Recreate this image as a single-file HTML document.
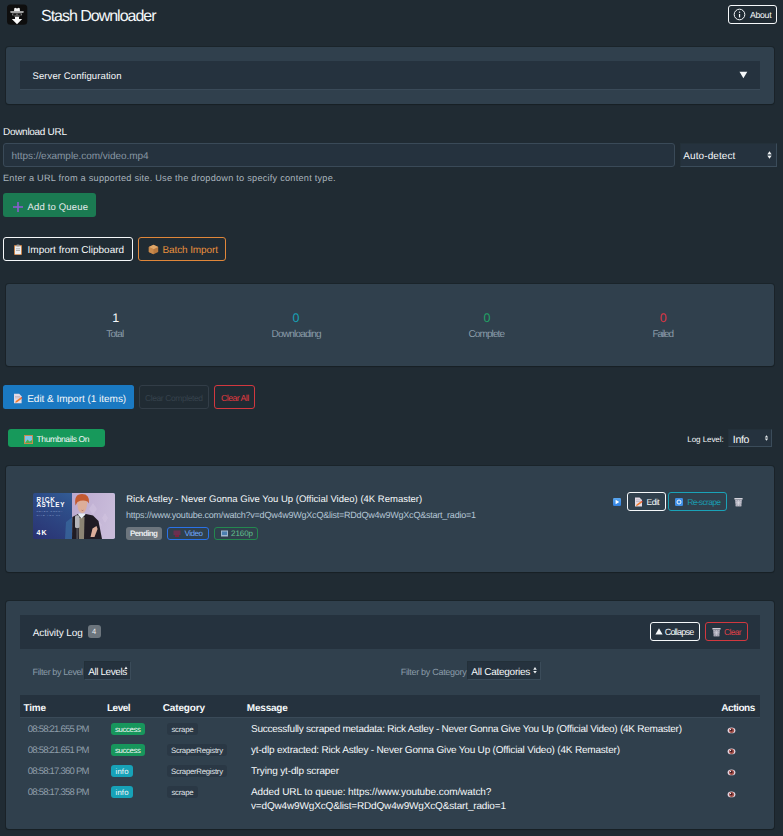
<!DOCTYPE html>
<html><head><meta charset="utf-8"><style>
html,body{margin:0;padding:0;}
body{width:783px;height:836px;background:#202b33;position:relative;overflow:hidden;font-family:"Liberation Sans",sans-serif;}
body>div{position:absolute;}
.t{white-space:nowrap;text-rendering:geometricPrecision;}
</style></head><body>
<svg style="position:absolute;left:7px;top:4px" width="21" height="21" viewBox="0 0 21 21">
<defs><linearGradient id="brim" x1="0" y1="0" x2="0" y2="1"><stop offset="0" stop-color="#e0e0e0"/><stop offset="1" stop-color="#8a8a8a"/></linearGradient></defs>
<rect x="0" y="0.5" width="20.3" height="20.2" rx="3.5" fill="#0e0e0e"/>
<path d="M7 7.2 L7.3 4.3 L8.2 3.8 L10 4.6 L11.8 3.8 L12.7 4.3 L13 7.2 Z" fill="#f4f4f4"/>
<path d="M3.4 7.2 H16.6 Q17 8.2 16.2 9 H3.8 Q3 8.2 3.4 7.2 Z" fill="url(#brim)"/>
<path d="M5 9.4 H15 V11.4 H5 Z" fill="#7a7a7a"/>
<ellipse cx="7.8" cy="10.5" rx="1.7" ry="0.9" fill="#1a1a1a"/>
<ellipse cx="12.2" cy="10.5" rx="1.7" ry="0.9" fill="#1a1a1a"/>
<path d="M7.5 11.4 H12.5 V13 H7.5 Z" fill="#6a6a6a"/>
<path d="M8 13 H12 V15 H15.2 L10 20.2 L4.8 15 H8 Z" fill="#fafafa"/>
</svg>
<div class="t" style="left:41.00px;top:9.00px;font-size:16px;line-height:16px;color:#f5f8fa;letter-spacing:-1.016px;">Stash Downloader</div>
<div style="left:728px;top:5px;width:49px;height:19px;border:1px solid #f5f8fa;border-radius:3px;box-sizing:border-box;"></div>
<svg style="position:absolute;left:733px;top:8px" width="13" height="13" viewBox="0 0 13 13"><circle cx="6.5" cy="6.5" r="5.3" fill="none" stroke="#f5f8fa" stroke-width="1"/><rect x="5.95" y="6" width="1.2" height="3.4" fill="#f5f8fa"/><rect x="5.95" y="3.6" width="1.2" height="1.2" fill="#f5f8fa"/></svg>
<div class="t" style="left:750.00px;top:11.00px;font-size:8.75px;line-height:8.75px;color:#f5f8fa;letter-spacing:-0.317px;">About</div>
<div style="left:6px;top:47px;width:768px;height:57px;background:#30404d;border-radius:3px;box-shadow:0 0 0 1px rgba(16,22,26,.35),0 1px 1px rgba(16,22,26,.3);"></div>
<div style="left:20px;top:61px;width:740px;height:29px;background:#25323e;border-bottom:1px solid #3a4a58;box-sizing:border-box;"></div>
<div class="t" style="left:32.50px;top:72.00px;font-size:9.5px;line-height:9.5px;color:#f5f8fa;letter-spacing:0.098px;">Server Configuration</div>
<svg style="position:absolute;left:739px;top:71px" width="9" height="8" viewBox="0 0 9 8"><path d="M0.5 0.8 H8.3 L4.4 7.2 Z" fill="#f5f8fa"/></svg>
<div class="t" style="left:3.00px;top:128.00px;font-size:10px;line-height:10px;color:#f5f8fa;letter-spacing:-0.296px;">Download URL</div>
<div style="left:3px;top:143px;width:672px;height:24px;background:#25323e;border:1px solid #3a4a58;border-radius:3px;box-sizing:border-box;"></div>
<div class="t" style="left:11.50px;top:152.00px;font-size:10px;line-height:10px;color:#8796a3;letter-spacing:-0.050px;">https://example.com/video.mp4</div>
<div style="left:680px;top:143px;width:97px;height:24px;background:#25323e;border-top:1px solid #233039;border-left:1px solid #233039;border-right:1px solid #3b4c5a;border-bottom:1px solid #3b4c5a;box-sizing:border-box;"></div>
<div class="t" style="left:683.30px;top:152.00px;font-size:10px;line-height:10px;color:#f5f8fa;letter-spacing:0.086px;">Auto-detect</div>
<svg style="position:absolute;left:767px;top:151px" width="5" height="8" viewBox="0 0 5 8"><path d="M2.5 0.3 L4.6 3.2 H0.4 Z M2.5 7.7 L4.6 4.8 H0.4 Z" fill="#f0f2f4"/><rect x="0.6" y="3.4" width="3.8" height="1.2" fill="#8a949c"/></svg>
<div class="t" style="left:3.00px;top:174.00px;font-size:9.2px;line-height:9.2px;color:#a9b4bd;letter-spacing:0.231px;">Enter a URL from a supported site. Use the dropdown to specify content type.</div>
<div style="left:3px;top:193px;width:93px;height:24px;background:#1b7a52;border-radius:3px;"></div>
<svg style="position:absolute;left:13px;top:202px" width="10" height="10" viewBox="0 0 10 10"><rect x="4.2" y="0" width="1.6" height="10" fill="#8a5ccf"/><rect x="0" y="4.2" width="10" height="1.6" fill="#8a5ccf"/></svg>
<div class="t" style="left:27.50px;top:203.00px;font-size:9.5px;line-height:9.5px;color:#e6ebee;letter-spacing:0.170px;">Add to Queue</div>
<div style="left:3px;top:237px;width:130px;height:24px;border:1px solid #f5f8fa;border-radius:3px;box-sizing:border-box;"></div>
<svg style="position:absolute;left:13px;top:244px" width="10" height="11" viewBox="0 0 10 11"><rect x="1" y="1" width="8" height="10" rx="1" fill="#c8834a"/><rect x="2" y="2.2" width="6" height="8" fill="#eceff2"/><rect x="3.5" y="0.5" width="3" height="2" rx="0.5" fill="#9a9a9a"/><rect x="3" y="4.5" width="4" height="0.7" fill="#999"/><rect x="3" y="6.3" width="4" height="0.7" fill="#999"/></svg>
<div class="t" style="left:27.60px;top:246.00px;font-size:10px;line-height:10px;color:#f5f8fa;letter-spacing:-0.010px;">Import from Clipboard</div>
<div style="left:138px;top:237px;width:88px;height:24px;border:1px solid #e0873a;border-radius:3px;box-sizing:border-box;"></div>
<svg style="position:absolute;left:148px;top:244px" width="11" height="11" viewBox="0 0 11 11"><path d="M5.5 0.8 L10.2 3 V8 L5.5 10.3 L0.8 8 V3 Z" fill="#b8793f"/><path d="M5.5 0.8 L10.2 3 L5.5 5.2 L0.8 3 Z" fill="#e0a86a"/><path d="M5.5 5.2 V10.3 L0.8 8 V3 Z" fill="#c98a4c"/></svg>
<div class="t" style="left:162.50px;top:246.00px;font-size:10px;line-height:10px;color:#e8903e;letter-spacing:-0.108px;">Batch Import</div>
<div style="left:6px;top:284px;width:768px;height:82px;background:#30404d;border-radius:3px;box-shadow:0 0 0 1px rgba(16,22,26,.35),0 1px 1px rgba(16,22,26,.3);"></div>
<div class="t" style="left:112.20px;top:312.00px;font-size:12.5px;line-height:12.5px;color:#f5f8fa;">1</div>
<div class="t" style="left:292.60px;top:312.00px;font-size:12.5px;line-height:12.5px;color:#17a2b8;">0</div>
<div class="t" style="left:483.50px;top:312.00px;font-size:12.5px;line-height:12.5px;color:#21a366;">0</div>
<div class="t" style="left:659.80px;top:312.00px;font-size:12.5px;line-height:12.5px;color:#dc3545;">0</div>
<div class="t" style="left:106.30px;top:330.00px;font-size:10px;line-height:10px;color:#8a9ba8;letter-spacing:-0.781px;">Total</div>
<div class="t" style="left:271.50px;top:330.00px;font-size:10px;line-height:10px;color:#8a9ba8;letter-spacing:-0.782px;">Downloading</div>
<div class="t" style="left:468.50px;top:330.00px;font-size:10px;line-height:10px;color:#8a9ba8;letter-spacing:-0.900px;">Complete</div>
<div class="t" style="left:652.40px;top:330.00px;font-size:10px;line-height:10px;color:#8a9ba8;letter-spacing:-1.107px;">Failed</div>
<div style="left:3px;top:385px;width:131px;height:24px;background:#1a79c2;border-radius:2.5px;"></div>
<svg style="position:absolute;left:13px;top:393px" width="10" height="11" viewBox="0 0 10 11"><path d="M1 0.8 H6.2 L8.6 3.2 V10.2 H1 Z" fill="#e4dae4"/><rect x="2" y="3" width="5" height="0.6" fill="#b0a8b8"/><rect x="2" y="4.6" width="5" height="0.6" fill="#b0a8b8"/><path d="M2.2 9.8 L2.8 8 L7.6 4.6 L8.8 5.8 L4 9.2 Z" fill="#f07a2a"/><path d="M7.6 4.6 L8.4 4 L9.4 5.2 L8.8 5.8 Z" fill="#e03a3a"/></svg>
<div class="t" style="left:27.20px;top:395.00px;font-size:10px;line-height:10px;color:#f5f8fa;letter-spacing:-0.021px;">Edit &amp; Import (1 items)</div>
<div style="left:139px;top:385px;width:70px;height:24px;border:1px solid #323d47;border-radius:3px;box-sizing:border-box;"></div>
<div class="t" style="left:145.00px;top:394.00px;font-size:8.5px;line-height:8.5px;color:#36424c;letter-spacing:-0.413px;">Clear Completed</div>
<div style="left:214px;top:385px;width:41px;height:24px;border:1px solid #d2383f;border-radius:3px;box-sizing:border-box;"></div>
<div class="t" style="left:221.00px;top:394.00px;font-size:8.75px;line-height:8.75px;color:#e0393f;letter-spacing:-0.548px;">Clear All</div>
<div style="left:8px;top:429px;width:97px;height:18px;background:#17995b;border-radius:3px;"></div>
<svg style="position:absolute;left:24px;top:435px" width="9" height="9" viewBox="0 0 9 9"><rect x="0" y="0" width="9" height="9" fill="#c98a4c"/><rect x="1" y="1" width="7" height="7" fill="#7fc4e8"/><path d="M1 8 L3.5 4.5 L5.5 6.5 L8 5 V8 Z" fill="#4caf50"/></svg>
<div class="t" style="left:36.50px;top:435.00px;font-size:8.5px;line-height:8.5px;color:#f5f8fa;letter-spacing:-0.386px;">Thumbnails On</div>
<div class="t" style="left:687.30px;top:436.00px;font-size:8px;line-height:8px;color:#f5f8fa;letter-spacing:-0.058px;">Log Level:</div>
<div style="left:728px;top:429px;width:44px;height:18px;background:#25323e;border-top:1px solid #233039;border-left:1px solid #233039;border-right:1px solid #3b4c5a;border-bottom:1px solid #3b4c5a;box-sizing:border-box;"></div>
<div class="t" style="left:732.80px;top:435.00px;font-size:10.5px;line-height:10.5px;color:#f5f8fa;letter-spacing:-0.305px;">Info</div>
<svg style="position:absolute;left:764px;top:435px" width="5" height="6" viewBox="0 0 5 6"><path d="M2.5 0.2 L4.2 2.5 H0.8 Z M2.5 5.8 L4.2 3.5 H0.8 Z" fill="#e8ecef"/></svg>
<div style="left:6px;top:466px;width:768px;height:106px;background:#30404d;border-radius:3px;box-shadow:0 0 0 1px rgba(16,22,26,.35),0 1px 1px rgba(16,22,26,.3);"></div>
<svg style="position:absolute;left:33px;top:493px" width="82" height="46" viewBox="0 0 82 46">
<defs>
<linearGradient id="gb" x1="0" y1="1" x2="1" y2="0"><stop offset="0" stop-color="#2a3272"/><stop offset="0.55" stop-color="#2e4f8a"/><stop offset="1" stop-color="#3a70a4"/></linearGradient>
<linearGradient id="gp" x1="0" y1="0" x2="1" y2="0.3"><stop offset="0" stop-color="#bba9cf"/><stop offset="1" stop-color="#c9bcda"/></linearGradient>
<clipPath id="cp"><rect width="82" height="46" rx="1.8"/></clipPath>
</defs>
<g clip-path="url(#cp)">
<rect width="82" height="46" fill="url(#gb)"/>
<rect x="39" y="0" width="43" height="46" fill="url(#gp)"/>
<path d="M60 10 L64 16 L60 22 L56 16 Z M72 20 L75 25 L72 30 L69 25 Z M66 28 L69 32 L66 36 L63 32 Z" fill="#d4c8e2" opacity="0.45"/>
<path d="M32 46 L33 29 L39 24.5 L39 46 Z" fill="#3a6a9e" opacity="0.75"/>
<path d="M39 46 L39.3 24 L45 21 H53 L60 22.5 L65.5 28 L69 46 Z" fill="#201c24"/>
<path d="M45.5 25 L51.5 24 L51 46 H46 Z" fill="#8c8474"/>
<path d="M45 21.5 L48.5 25.5 L52.5 21.5 L51.5 20.5 H46 Z" fill="#e6ecf2"/>
<path d="M44.3 7 Q44 19.5 49 20 Q54 19.8 54.4 7 Z" fill="#dcae9a"/>
<path d="M48 16.5 Q49.5 17.8 51 16.5 Q49.5 18.8 48 16.5 Z" fill="#8a4040"/>
<path d="M42.5 12.5 Q40.5 1 49 1 Q57 1 56 10.5 L54.5 8.5 Q49.5 6.5 44.5 9 Z" fill="#c45a30"/>
<rect x="42" y="22.3" width="4.5" height="12.7" rx="1.5" fill="#b4b4ba"/>
<rect x="43.3" y="35" width="2" height="11" fill="#4a4a52"/>
<path d="M57.5 44 L59.5 35.5 L63.5 33 L64.6 36 L61.5 44 Z" fill="#dcae9a"/>
<text x="3.4" y="9" font-family="Liberation Sans" font-weight="bold" font-size="6.3" fill="#ffffff" letter-spacing="1.0">RICK</text>
<text x="3.4" y="14.3" font-family="Liberation Sans" font-weight="bold" font-size="6.3" fill="#ffffff" letter-spacing="0.62">ASTLEY</text>
<text x="3.4" y="19.1" font-family="Liberation Sans" font-size="2.5" fill="#8fa3cf" letter-spacing="0.75">NEVER GONNA</text>
<text x="3.4" y="22.5" font-family="Liberation Sans" font-size="2.5" fill="#8fa3cf" letter-spacing="0.75">GIVE YOU UP</text>
<text x="3.4" y="42" font-family="Liberation Sans" font-weight="bold" font-size="7" fill="#ffffff" letter-spacing="1.2">4K</text>
</g>
</svg>
<div class="t" style="left:126.20px;top:495.00px;font-size:9.5px;line-height:9.5px;color:#f5f8fa;letter-spacing:0.002px;">Rick Astley - Never Gonna Give You Up (Official Video) (4K Remaster)</div>
<div class="t" style="left:126.00px;top:511.00px;font-size:9px;line-height:9px;color:#b5c7d6;letter-spacing:-0.225px;">https://www.youtube.com/watch?v=dQw4w9WgXcQ&amp;list=RDdQw4w9WgXcQ&amp;start_radio=1</div>
<div style="left:126px;top:527px;width:36px;height:13px;background:#6c757d;border-radius:3px;"></div>
<div class="t" style="left:130.00px;top:530.00px;font-size:8px;line-height:8px;color:#e9ecef;letter-spacing:-0.593px;font-weight:bold;">Pending</div>
<div style="left:167px;top:527px;width:42px;height:13px;border:1px solid #2a72e8;border-radius:3px;box-sizing:border-box;"></div>
<svg style="position:absolute;left:173px;top:530px" width="8" height="7" viewBox="0 0 8 7"><rect x="0.5" y="0.5" width="7" height="4.5" fill="#6a3050"/><rect x="2" y="5.5" width="4" height="1" fill="#c03"/></svg>
<div class="t" style="left:184.50px;top:530.00px;font-size:8px;line-height:8px;color:#6ea8fe;letter-spacing:-0.454px;">Video</div>
<div style="left:214px;top:527px;width:44px;height:13px;border:1px solid #24884f;border-radius:3px;box-sizing:border-box;"></div>
<svg style="position:absolute;left:221px;top:530px" width="7" height="7" viewBox="0 0 7 7"><rect x="0" y="0.5" width="7" height="6" fill="#9fb8cf"/><rect x="1" y="1.5" width="5" height="3.5" fill="#4b7fb0"/></svg>
<div class="t" style="left:231.00px;top:530.00px;font-size:8px;line-height:8px;color:#62c08e;letter-spacing:-0.062px;">2160p</div>
<svg style="position:absolute;left:612.5px;top:498px" width="8" height="8" viewBox="0 0 8 8"><defs><linearGradient id="pl" x1="0" y1="0" x2="0" y2="1"><stop offset="0" stop-color="#5aa8f0"/><stop offset="1" stop-color="#2f7fe0"/></linearGradient></defs><rect width="8" height="8" rx="1.2" fill="url(#pl)"/><path d="M2.6 1.8 L6.2 4 L2.6 6.2 Z" fill="#fff"/></svg>
<div style="left:627px;top:492px;width:39px;height:19px;border:1px solid #f5f8fa;border-radius:3px;box-sizing:border-box;"></div>
<svg style="position:absolute;left:634px;top:497px" width="9" height="10" viewBox="0 0 9 10"><path d="M1 0.5 H5.5 L8 3 V9.5 H1 Z" fill="#e4dae4"/><rect x="2" y="2.6" width="4.5" height="0.6" fill="#b0a8b8"/><rect x="2" y="4.1" width="4.5" height="0.6" fill="#b0a8b8"/><path d="M2 9.2 L2.6 7.5 L7 4.3 L8.1 5.4 L3.7 8.6 Z" fill="#f07a2a"/><path d="M7 4.3 L7.8 3.7 L8.8 4.8 L8.1 5.4 Z" fill="#e03a3a"/></svg>
<div class="t" style="left:646.60px;top:498.00px;font-size:8.5px;line-height:8.5px;color:#f5f8fa;letter-spacing:-0.516px;">Edit</div>
<div style="left:668px;top:492px;width:59px;height:19px;border:1px solid #1aa3b8;border-radius:3px;box-sizing:border-box;"></div>
<svg style="position:absolute;left:675px;top:498px" width="8" height="8" viewBox="0 0 8 8"><rect width="8" height="8" rx="1.2" fill="#3f8fe6"/><circle cx="4" cy="4" r="2" fill="none" stroke="#fff" stroke-width="0.9"/></svg>
<div class="t" style="left:687.20px;top:498.00px;font-size:8.5px;line-height:8.5px;color:#1a9db0;letter-spacing:-0.676px;">Re-scrape</div>
<svg style="position:absolute;left:734px;top:497px" width="9" height="10" viewBox="0 0 9 10"><rect x="0.3" y="1" width="8.4" height="1.4" rx="0.5" fill="#d4d4dc"/><path d="M1 2.4 H8 L7.3 9.4 H1.7 Z" fill="#a9a9b6"/><path d="M2 3.2 L7 8.6 M7 3.2 L2 8.6 M4.5 3 V9 M1.6 5.8 H7.4" stroke="#dcdce4" stroke-width="0.6"/></svg>
<div style="left:6px;top:601px;width:768px;height:228px;background:#30404d;border-radius:3px;box-shadow:0 0 0 1px rgba(16,22,26,.35),0 1px 1px rgba(16,22,26,.3);"></div>
<div style="left:20px;top:615px;width:740px;height:34px;background:#25323e;"></div>
<div class="t" style="left:32.70px;top:629.00px;font-size:10px;line-height:10px;color:#f5f8fa;letter-spacing:-0.103px;">Activity Log</div>
<div style="left:88px;top:625px;width:13px;height:13px;background:#6c757d;border-radius:3px;"></div>
<div class="t" style="left:92.00px;top:628.00px;font-size:7.5px;line-height:7.5px;color:#e9ecef;">4</div>
<div style="left:650px;top:622px;width:50px;height:19px;border:1px solid #f5f8fa;border-radius:3px;box-sizing:border-box;"></div>
<svg style="position:absolute;left:655px;top:628px" width="8" height="7" viewBox="0 0 8 7"><path d="M4 0.3 L7.6 6.6 H0.4 Z" fill="#f5f8fa"/></svg>
<div class="t" style="left:664.70px;top:628.00px;font-size:9px;line-height:9px;color:#f5f8fa;letter-spacing:-0.789px;">Collapse</div>
<div style="left:705px;top:622px;width:43px;height:19px;border:1px solid #d2383f;border-radius:3px;box-sizing:border-box;"></div>
<svg style="position:absolute;left:712px;top:627px" width="9" height="10" viewBox="0 0 9 10"><rect x="0.3" y="1" width="8.4" height="1.4" rx="0.5" fill="#c8c8d0"/><path d="M1 2.4 H8 L7.3 9.4 H1.7 Z" fill="#9a9aa8"/><path d="M2 3.2 L7 8.6 M7 3.2 L2 8.6 M4.5 3 V9 M1.6 5.8 H7.4" stroke="#d0d0da" stroke-width="0.6"/></svg>
<div class="t" style="left:724.00px;top:628.00px;font-size:8.5px;line-height:8.5px;color:#df3f46;letter-spacing:-0.653px;">Clear</div>
<div class="t" style="left:32.60px;top:668.00px;font-size:9px;line-height:9px;color:#8a9ba8;letter-spacing:-0.394px;">Filter by Level</div>
<div style="left:84px;top:661px;width:47px;height:19px;background:#25323e;border-top:1px solid #233039;border-left:1px solid #233039;border-right:1px solid #3b4c5a;border-bottom:1px solid #3b4c5a;box-sizing:border-box;"></div>
<div class="t" style="left:88.20px;top:668.00px;font-size:10px;line-height:10px;color:#f5f8fa;letter-spacing:-0.422px;">All Levels</div>
<div class="t" style="left:400.70px;top:668.00px;font-size:9px;line-height:9px;color:#8a9ba8;letter-spacing:-0.296px;">Filter by Category</div>
<div style="left:467px;top:661px;width:74px;height:19px;background:#25323e;border-top:1px solid #233039;border-left:1px solid #233039;border-right:1px solid #3b4c5a;border-bottom:1px solid #3b4c5a;box-sizing:border-box;"></div>
<div class="t" style="left:471.30px;top:668.00px;font-size:10px;line-height:10px;color:#f5f8fa;letter-spacing:-0.250px;">All Categories</div>
<svg style="position:absolute;left:533px;top:667px" width="4" height="7" viewBox="0 0 4 7"><path d="M2 0 L3.8 2.8 H0.2 Z M2 6.5 L3.8 4 H0.2 Z" fill="#eef1f3"/></svg>
<svg style="position:absolute;left:124px;top:666px" width="4" height="7" viewBox="0 0 4 7"><path d="M2 0.5 L3.6 3 H0.4 Z" fill="#eef1f3"/></svg>
<div style="left:20px;top:695px;width:740px;height:23px;background:#25323e;border-bottom:1px solid #3a4a58;box-sizing:border-box;"></div>
<div class="t" style="left:23.60px;top:704.00px;font-size:10px;line-height:10px;color:#f5f8fa;letter-spacing:-0.253px;font-weight:bold;">Time</div>
<div class="t" style="left:107.00px;top:704.00px;font-size:10px;line-height:10px;color:#f5f8fa;letter-spacing:-0.493px;font-weight:bold;">Level</div>
<div class="t" style="left:162.80px;top:704.00px;font-size:10px;line-height:10px;color:#f5f8fa;letter-spacing:-0.164px;font-weight:bold;">Category</div>
<div class="t" style="left:246.80px;top:704.00px;font-size:10px;line-height:10px;color:#f5f8fa;letter-spacing:-0.208px;font-weight:bold;">Message</div>
<div class="t" style="left:721.30px;top:704.00px;font-size:10px;line-height:10px;color:#f5f8fa;letter-spacing:-0.445px;font-weight:bold;">Actions</div>
<div class="t" style="left:27.80px;top:725.00px;font-size:9.5px;line-height:9.5px;color:#8f9eaa;letter-spacing:-0.769px;">08:58:21.655 PM</div>
<div style="left:111px;top:723px;width:34px;height:12px;background:#17965c;border-radius:3px;"></div>
<div class="t" style="left:115.00px;top:726.00px;font-size:7.75px;line-height:7.75px;color:#f5f8fa;letter-spacing:-0.333px;">success</div>
<div style="left:167px;top:723px;width:31px;height:12px;background:#2a3845;border-radius:3px;"></div>
<div class="t" style="left:171.50px;top:726.00px;font-size:7.75px;line-height:7.75px;color:#e2e8ec;letter-spacing:-0.252px;">scrape</div>
<div class="t" style="left:251.00px;top:725.00px;font-size:10px;line-height:10px;color:#f5f8fa;letter-spacing:-0.249px;">Successfully scraped metadata: Rick Astley - Never Gonna Give You Up (Official Video) (4K Remaster)</div>
<svg style="position:absolute;left:727px;top:727px" width="9" height="7" viewBox="0 0 9 7"><ellipse cx="4.5" cy="3.4" rx="3.9" ry="2.9" fill="#e6d6e2"/><circle cx="4.6" cy="3.4" r="2.5" fill="#a04e46"/><circle cx="4.3" cy="3.1" r="1.2" fill="#3e1420"/><circle cx="3.6" cy="2.4" r="0.55" fill="#ffffff"/></svg>
<div class="t" style="left:27.80px;top:746.00px;font-size:9.5px;line-height:9.5px;color:#8f9eaa;letter-spacing:-0.769px;">08:58:21.651 PM</div>
<div style="left:111px;top:744px;width:34px;height:12px;background:#17965c;border-radius:3px;"></div>
<div class="t" style="left:115.00px;top:747.00px;font-size:7.75px;line-height:7.75px;color:#f5f8fa;letter-spacing:-0.333px;">success</div>
<div style="left:167px;top:744px;width:60px;height:12px;background:#2a3845;border-radius:3px;"></div>
<div class="t" style="left:171.00px;top:747.00px;font-size:7.75px;line-height:7.75px;color:#e2e8ec;letter-spacing:-0.254px;">ScraperRegistry</div>
<div class="t" style="left:251.00px;top:746.00px;font-size:10px;line-height:10px;color:#f5f8fa;letter-spacing:-0.192px;">yt-dlp extracted: Rick Astley - Never Gonna Give You Up (Official Video) (4K Remaster)</div>
<svg style="position:absolute;left:727px;top:748px" width="9" height="7" viewBox="0 0 9 7"><ellipse cx="4.5" cy="3.4" rx="3.9" ry="2.9" fill="#e6d6e2"/><circle cx="4.6" cy="3.4" r="2.5" fill="#a04e46"/><circle cx="4.3" cy="3.1" r="1.2" fill="#3e1420"/><circle cx="3.6" cy="2.4" r="0.55" fill="#ffffff"/></svg>
<div class="t" style="left:27.80px;top:767.00px;font-size:9.5px;line-height:9.5px;color:#8f9eaa;letter-spacing:-0.769px;">08:58:17.360 PM</div>
<div style="left:111px;top:765px;width:22px;height:12px;background:#17a2b8;border-radius:3px;"></div>
<div class="t" style="left:115.50px;top:768.00px;font-size:7.75px;line-height:7.75px;color:#f5f8fa;letter-spacing:0.168px;">info</div>
<div style="left:167px;top:765px;width:60px;height:12px;background:#2a3845;border-radius:3px;"></div>
<div class="t" style="left:171.00px;top:768.00px;font-size:7.75px;line-height:7.75px;color:#e2e8ec;letter-spacing:-0.254px;">ScraperRegistry</div>
<div class="t" style="left:251.00px;top:767.00px;font-size:10px;line-height:10px;color:#f5f8fa;letter-spacing:-0.138px;">Trying yt-dlp scraper</div>
<svg style="position:absolute;left:727px;top:769px" width="9" height="7" viewBox="0 0 9 7"><ellipse cx="4.5" cy="3.4" rx="3.9" ry="2.9" fill="#e6d6e2"/><circle cx="4.6" cy="3.4" r="2.5" fill="#a04e46"/><circle cx="4.3" cy="3.1" r="1.2" fill="#3e1420"/><circle cx="3.6" cy="2.4" r="0.55" fill="#ffffff"/></svg>
<div class="t" style="left:27.80px;top:788.00px;font-size:9.5px;line-height:9.5px;color:#8f9eaa;letter-spacing:-0.769px;">08:58:17.358 PM</div>
<div style="left:111px;top:786px;width:22px;height:12px;background:#17a2b8;border-radius:3px;"></div>
<div class="t" style="left:115.50px;top:789.00px;font-size:7.75px;line-height:7.75px;color:#f5f8fa;letter-spacing:0.168px;">info</div>
<div style="left:167px;top:786px;width:31px;height:12px;background:#2a3845;border-radius:3px;"></div>
<div class="t" style="left:171.50px;top:789.00px;font-size:7.75px;line-height:7.75px;color:#e2e8ec;letter-spacing:-0.252px;">scrape</div>
<div class="t" style="left:251.00px;top:788.00px;font-size:10px;line-height:10px;color:#f5f8fa;letter-spacing:-0.078px;">Added URL to queue: https://www.youtube.com/watch?</div>
<svg style="position:absolute;left:727px;top:791px" width="9" height="7" viewBox="0 0 9 7"><ellipse cx="4.5" cy="3.4" rx="3.9" ry="2.9" fill="#e6d6e2"/><circle cx="4.6" cy="3.4" r="2.5" fill="#a04e46"/><circle cx="4.3" cy="3.1" r="1.2" fill="#3e1420"/><circle cx="3.6" cy="2.4" r="0.55" fill="#ffffff"/></svg>
<div class="t" style="left:251.00px;top:802.00px;font-size:10px;line-height:10px;color:#f5f8fa;letter-spacing:-0.157px;">v=dQw4w9WgXcQ&amp;list=RDdQw4w9WgXcQ&amp;start_radio=1</div>
</body></html>
